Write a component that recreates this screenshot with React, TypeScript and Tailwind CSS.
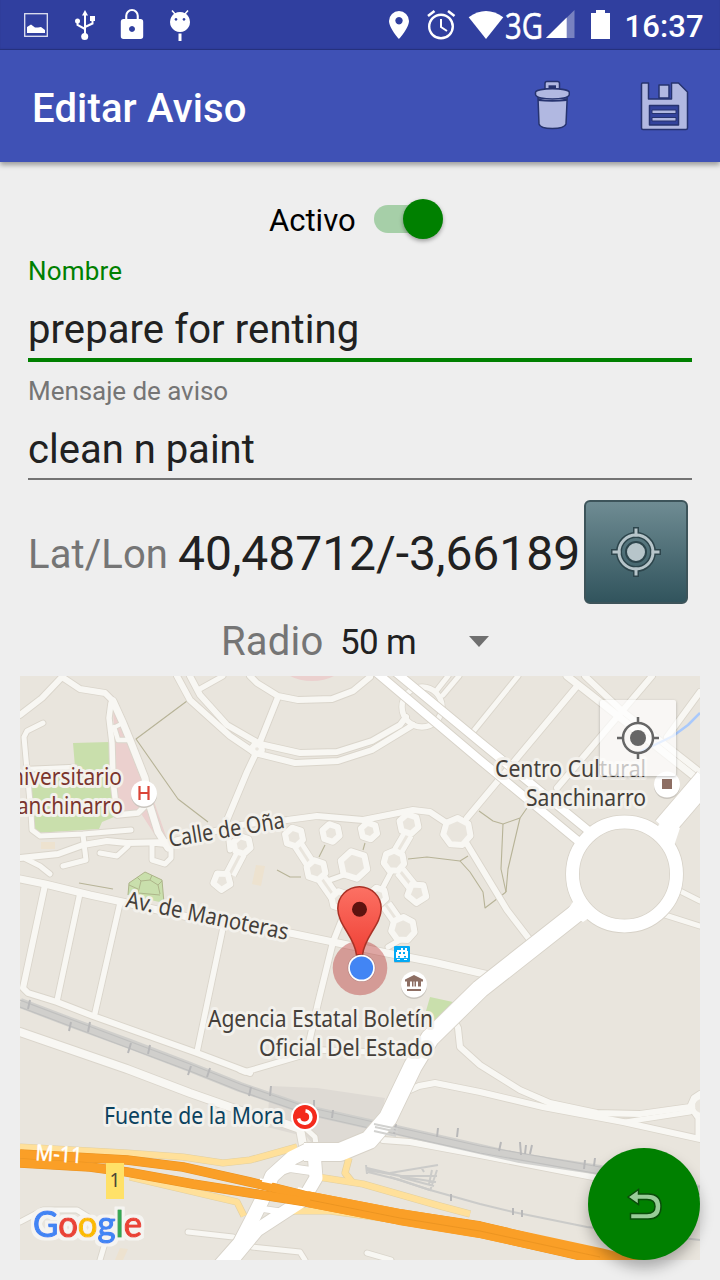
import React from "react";

type Line = [string, number];

const BG = "#e9e5dd";

const minorRoads: Line[] = [
  ["20,715 42,698 62,677 80,689 105,693 113,701", 6],
  ["113,701 123,723 130,740 145,778 149,803 158,832 168,848", 7],
  ["111,703 109,718 112,743 113,780 117,815 138,813 145,806", 5.5],
  ["113,728 123,723", 4],
  ["114,727 118,740 130,740", 4.5],
  ["43,723 27,731 24,737 27,770 31,813 32,830 40,836 83,834 131,830", 5],
  ["28,769 75,767", 4.5],
  ["20,858 58,854 83,845 107,841 127,843 170,842", 6],
  ["83,835 86,860 63,866", 5],
  ["100,853 117,856 128,846", 5],
  ["26,859 40,866 50,874", 5],
  ["152,843 152,860 165,864 171,858 171,845 152,843", 5],
  ["20,879 45,884 90,895 127,903 223,925 290,933 333,942 387,953 433,962 480,973 498,977", 7],
  ["45,885 23,988 28,993 57,1002 93,1016 197,1053 250,1073", 6],
  ["80,893 57,1001", 5.5],
  ["120,903 95,1013", 5.5],
  ["223,928 197,1052", 5.5],
  ["20,1032 127,1069 190,1093 250,1114 283,1123 300,1129 303,1145", 8],
  ["240,1070 245,1072 303,1055 320,1050 373,1052", 5.5],
  ["343,917 333,942 318,1003 308,1047", 6],
  ["304,1127 315,1137 317,1152", 5],
  ["177,676 190,700 230,736 255,753 295,763 338,761 372,750 413,725", 6],
  ["190,676 200,695 227,725 260,744 300,753 337,752 372,741 400,725 406,717", 6],
  ["198,690 223,676", 5],
  ["256,753 247,772 227,820", 6],
  ["170,842 240,825 287,820 317,816 363,820 413,810 430,812 445,822", 6],
  ["250,676 257,683 278,696 298,700 332,699 353,691 370,677", 6],
  ["278,697 260,742", 6],
  ["437,690 448,676", 5],
  ["443,695 459,676", 5],
  ["518,676 472,733", 5],
  ["578,685 467,818", 6],
  ["652,676 557,788", 6],
  ["700,692 667,737", 6],
  ["567,676 613,712 700,781", 7],
  ["585,676 620,709 700,772", 6],
  ["467,844 507,910 530,940 545,945 578,915", 6],
  ["665,915 700,926", 5],
  ["680,891 700,901", 5],
  ["410,1090 419,1086 435,1083 480,1092 543,1107 623,1122 700,1139", 6],
  ["450,1012 458,1028 460,1047 480,1065 520,1090 550,1103 597,1113 640,1114 690,1107 694,1098 700,1094", 6],
  ["625,1122 690,1112", 5],
  ["691,1108 698,1118 698,1138", 5],
  ["383,1140 410,1142 480,1155 593,1177 700,1198", 6],
  ["252,1247 300,1252 305,1260", 5],
  ["367,1253 391,1260", 5],
  ["188,1232 233,1237", 5],
  ["20,1222 43,1210 77,1210 90,1218 105,1243 100,1260", 5],
  ["388,947 400,940", 5],
  ["391,872 380,893", 5],
  ["330,880 344,875", 5],
  ["228,832 230,850", 5],
];

const doubleRoads = ["298,845 311,865", "408,834 398,851", "322,879 336,899", "400,871 412,886", "386,905 398,922", "230,874 241,853"];

const rings: [number, number, number, number][] = [
  [294, 837, 9.5, 6], [331, 833, 9, 6], [369, 831, 8.5, 6], [409, 824, 10, 6],
  [354, 865, 14, 6], [394, 861, 10.5, 7], [316, 870, 10, 6], [417, 893, 10, 5],
  [340, 900, 9, 6], [378, 896, 8.5, 6], [403, 929, 12, 7], [457, 832, 14, 7],
  [222, 881, 9, 5], [242, 845, 9, 6], [257, 749, 5, 8],
];

const paths = [
  "187,701 136,739 178,799 208,822", "79,883 113,889", "277,870 290,877 301,877",
  "325,845 319,857", "365,843 363,850", "408,859 427,857 460,861 468,856",
  "460,861 470,872 483,892 485,908 506,892", "479,811 493,821 503,824 520,818 527,808",
  "503,824 501,869 506,892", "520,818 508,869 506,892",
];

const mainRoads: Line[] = [
  ["377,673 480,760 583,845", 8],
  ["393,670 480,742 595,836", 8],
  ["664,828 706,779", 22],
  ["588,904 480,989 430,1038 413,1066 388,1118 369,1140 340,1152 304,1152", 18],
  ["310,1149 292,1158 272,1176 262,1200 254,1216 240,1243 218,1268", 14],
  ["314,1152 316,1178 303,1200 280,1215 257,1230 229,1264", 13],
  ["272,1174 290,1168 318,1172", 8],
  ["256,1208 284,1212", 6],
];

const ramps: Line[] = [
  ["20,1147 127,1153 183,1157 223,1163 250,1160 297,1147", 6],
  ["20,1156 60,1162", 4],
  ["130,1177 173,1187 237,1202 244,1216", 6],
  ["318,1177 363,1184 440,1206 470,1214", 6],
  ["349,1158 345,1173 353,1183", 6],
  ["280,1211 330,1211 440,1226 470,1228", 6],
];

const poly = (cx: number, cy: number, r: number, n: number) =>
  Array.from({ length: n }, (_, i) => {
    const a = ((i + 0.3) / n) * Math.PI * 2;
    return `${(cx + r * Math.cos(a)).toFixed(1)},${(cy + r * Math.sin(a)).toFixed(1)}`;
  }).join(" ");

function Label({ x, y, w, size = 23, color = "#453f3a", children, transform }: { x: number; y: number; w: number; size?: number; color?: string; children: string; transform?: string }) {
  return (
    <text x={x} y={y} textLength={w} lengthAdjust="spacingAndGlyphs" transform={transform} fontSize={size} fill={color} stroke="#f3f1ec" strokeWidth="6" strokeLinejoin="round" paintOrder="stroke" fontFamily="'Noto Sans', 'Open Sans', sans-serif">
      {children}
    </text>
  );
}

function MapCanvas() {
  return (
    <svg className="block h-full w-full" viewBox="20 676 680 584" fill="none" strokeLinejoin="round" strokeLinecap="butt">
      <defs>
        <linearGradient id="pin" x1="0" y1="0" x2="0" y2="1">
          <stop offset="0" stopColor="#fc7164" />
          <stop offset="1" stopColor="#ef4136" />
        </linearGradient>
        <filter id="halo" x="-10%" y="-20%" width="120%" height="140%">
          <feMorphology in="SourceAlpha" operator="dilate" radius="3" result="fat" />
          <feGaussianBlur in="fat" stdDeviation="0.6" result="soft" />
          <feFlood floodColor="#f5f4f1" />
          <feComposite in2="soft" operator="in" result="edge" />
          <feMerge>
            <feMergeNode in="edge" />
            <feMergeNode in="SourceGraphic" />
          </feMerge>
        </filter>
      </defs>
      <rect x="20" y="676" width="680" height="584" fill={BG} />
      <path fill="#c9dfac" d="M73 743L110 742L114 817L102 822L99 829L35 833L30 770L75 767ZM145 872L162 880L164 903L128 895L129 883ZM430 997L453 1002L427 1028L424 1018Z" />
      <path stroke="#aeb58a" d="M145 872L162 880L164 903M145 872L129 883L128 895M138 893L141 881L150 880L158 885L160 894M138 893L160 895M141 881L137 877M150 880L152 875M138 889L129 885M158 885L162 881" />
      <path fill="#ebd0ce" d="M113 707L130 740L137 747L150 790L168 842L155 835L140 812L118 813Z" />
      <ellipse cx="312" cy="664" rx="31" ry="17" fill="#ebd0ce" />
      <path fill="#ede2cf" d="M41 842h14v7h-14zM256 865l9 1l-4 20l-9 -2zM120 1248l8 1l-5 11h-8z" />
      <path fill="#dedad4" d="M270 1086L317 1088L385 1098L377 1137L350 1151L320 1153L307 1137L267 1127Z" />

      <g stroke="#b7b397" strokeWidth="1.1">
        {paths.map((p) => <polyline key={p} points={p} />)}
      </g>

      <g stroke="#dad5cb">
        {minorRoads.map(([p, w]) => <polyline key={p} points={p} strokeWidth={w + 1.8} strokeLinecap="round" />)}
        {doubleRoads.map((p) => <polyline key={p} points={p} strokeWidth="14" />)}
        {rings.map(([x, y, r, n]) => <polygon key={`${x}-${y}`} points={poly(x, y, r, n)} strokeWidth="7.5" />)}
        <circle cx="422" cy="707" r="20" strokeWidth="7" />
      </g>
      <g stroke="#f8f7f3">
        {minorRoads.map(([p, w]) => <polyline key={p} points={p} strokeWidth={w} strokeLinecap="round" />)}
        {doubleRoads.map((p) => <polyline key={p} points={p} strokeWidth="12.5" />)}
        {doubleRoads.map((p) => <polyline key={`m${p}`} points={p} strokeWidth="3" stroke={BG} />)}
        {rings.map(([x, y, r, n]) => <polygon key={`${x}-${y}`} points={poly(x, y, r, n)} strokeWidth="6" fill={BG} />)}
        <circle cx="422" cy="707" r="20" strokeWidth="5.5" />
        <circle cx="702" cy="1106" r="9" strokeWidth="4" />
      </g>

      <g stroke="#cbcbc9">
        <polyline points="20,1003 70,1022 130,1044 190,1067 240,1087 307,1110 387,1128 480,1149 520,1158 600,1170 700,1190" strokeWidth="10" opacity="0.85" />
        <polyline points="20,1000 70,1019 190,1064 240,1084 307,1107 387,1125 480,1146 600,1167 700,1187" strokeWidth="1.2" stroke="#c0c0bf" />
        <polyline points="20,1007 70,1026 190,1071 240,1091 307,1114 387,1132 480,1153 600,1174 700,1194" strokeWidth="1.2" stroke="#c0c0bf" />
        <polyline points="390,1177 430,1190 480,1204 513,1212 587,1227 700,1240" strokeWidth="2" />
        <path strokeWidth="2" d="M367 1170L400 1176L437 1176M367 1168L410 1178L436 1182M368 1172L400 1180L430 1190M390 1173L438 1165M437 1170L430 1191M432 1170L429 1184M421 1167L424 1172M400 1177L434 1186M366 1165L367 1174" />
      </g>
      <g stroke="#b8b8b9" strokeWidth="2">
        <path d="M30 1000l-2 9M71 1022l-2 9M90 1022l-2 10M131 1043l-3 10M150 1045l-2 9M191 1066l-3 9M210 1068l-3 9M251 1087l-2 9M271 1086l-1 10M314 1100v9M333 1110l-1 8M376 1124l-2 8M396 1124l-2 10M438 1128l-1 9M458 1128l-1 9M501 1142l-2 9M520 1142l1 13M526 1145l-1 9M532 1145l-2 9M585 1160l-1 9M595 1158l-1 8M513 1208v7M522 1210v7M451 1194v7" />
      </g>

      <g stroke="#d7d2c8">
        {mainRoads.map(([p, w]) => <polyline key={p} points={p} strokeWidth={w + 1.8} />)}
      </g>
      <circle cx="624.5" cy="874" r="52" stroke="#d7d2c8" strokeWidth="14.5" fill={BG} />
      <circle cx="624.5" cy="874" r="52" stroke="#ffffff" strokeWidth="13" />
      <path fill="#fff" d="M566 912L577 896L598 912L583 922ZM652 834L664 818L680 828L674 846Z" />

      <g stroke="#e2cfa0">
        {ramps.map(([p, w]) => <polyline key={p} points={p} strokeWidth={w + 1.2} />)}
      </g>
      <g stroke="#ffe09a">
        {ramps.map(([p, w]) => <polyline key={p} points={p} strokeWidth={w} />)}
      </g>
      <g stroke="#ffffff">
        {mainRoads.map(([p, w]) => <polyline key={p} points={p} strokeWidth={w} />)}
      </g>
      <path d="M374 1124L398 1129M375 1127L398 1132M374 1131L396 1136" stroke="#d2d2d0" strokeWidth="2" />

      <g>
        <polyline points="20,1154 127,1160 183,1167 250,1182 307,1196 400,1214 480,1226 600,1255 640,1266" stroke="#e99220" strokeWidth="9.5" />
        <polyline points="20,1163 90,1167 127,1172 193,1184 250,1193 307,1202 400,1220 480,1233 560,1251 640,1270" stroke="#e99220" strokeWidth="9.5" />
        <polyline points="20,1154 127,1160 183,1167 250,1182 307,1196 400,1214 480,1226 600,1255 640,1266" stroke="#fa9f27" strokeWidth="8.5" />
        <polyline points="20,1163 90,1167 127,1172 193,1184 250,1193 307,1202 400,1220 480,1233 560,1251 640,1270" stroke="#fa9f27" strokeWidth="8.5" />
        <polyline points="307,1199 400,1217 480,1230 600,1256 660,1271" stroke="#fa9f27" strokeWidth="16" />
        <polyline points="310,1200 400,1218 480,1231 600,1257" stroke="#e99220" strokeWidth="0.8" />
        <path d="M260 1179l13 3M262 1181l10 2M298 1188l12 2" stroke="#fff" strokeWidth="1.5" />
      </g>

      <path d="M700 713L688 725L673 736L640 752" stroke="#a9c9fb" strokeWidth="2.5" />

      <text x="35" y="1160" fontSize="22" fill="#fff" stroke="#fff" strokeWidth="0.5" textLength="47" lengthAdjust="spacingAndGlyphs" transform="rotate(4 35 1160)" fontFamily="'Noto Sans', sans-serif">M-11</text>
      <rect x="106" y="1163" width="18" height="36" fill="#ffe168" />
      <text x="115" y="1187" fontSize="19" textAnchor="middle" fill="#4a4636" fontFamily="'Noto Sans', sans-serif">1</text>

      <Label x={11} y={785} w={111} color="#7b352d">niversitario</Label>
      <Label x={17} y={814} w={106} color="#7b352d">anchinarro</Label>
      <Label x={170} y={847} w={117} transform="rotate(-9.5 170 847)">Calle de Oña</Label>
      <Label x={125} y={907} w={165} transform="rotate(11.5 125 907)">Av. de Manoteras</Label>
      <Label x={495} y={776.5} w={151}>Centro Cultural</Label>
      <Label x={526} y={805.5} w={120}>Sanchinarro</Label>
      <Label x={208} y={1026.5} w={225}>Agencia Estatal Boletín</Label>
      <Label x={259} y={1055.5} w={174}>Oficial Del Estado</Label>
      <Label x={104} y={1123.5} w={180} color="#0b425f">Fuente de la Mora</Label>

      <circle cx="144" cy="795" r="13" fill="#c9c5be" />
      <circle cx="144" cy="793.5" r="13" fill="#fff" />
      <path d="M139.5 786v14M148.5 786v14M139.5 793h9" stroke="#db4437" strokeWidth="2.2" />
      <circle cx="667" cy="786" r="13" fill="#c9c5be" />
      <circle cx="667" cy="784.5" r="13" fill="#fff" />
      <rect x="662" y="779" width="10" height="10" fill="#8d6e63" />
      <circle cx="414" cy="986" r="13" fill="#c9c5be" />
      <circle cx="414" cy="984.5" r="13" fill="#fff" />
      <path fill="#8d6e63" d="M414 975l9 4.5v2h-2v5h-3v-5h-2v5h-1.5v-5h-1v5h-1.5v-5h-2v5h-3v-5h-2v-2zM407 989h14v2h-14z" />
      <rect x="394" y="947" width="16" height="16" rx="1" fill="#c2beb6" />
      <rect x="394" y="946" width="16" height="16" rx="1" fill="#03a9f4" />
      <path fill="#fff" d="M399 950h2v-2h2v2h2v-2h2v3h1v7h-12v-6h1v-2zM397 959h3v1h-3zM404 959h3v1h-3z" />
      <path fill="#03a9f4" d="M399 952h2v2h-2zM403 952h2v2h-2zM398 956h2v1.5h-2zM404 956h2v1.5h-2z" />
      <circle cx="305" cy="1117" r="14" fill="#fff" />
      <circle cx="305" cy="1117" r="12" fill="#f42a1c" />
      <path d="M305.5 1110.8a6.3 6.3 0 1 1 -7 7.7" stroke="#fff" strokeWidth="3.5" />
      <circle cx="304" cy="1116.5" r="2.5" fill="#f42a1c" />

      <circle cx="360" cy="968" r="27.3" fill="#b22222" fillOpacity="0.38" />
      <path d="M359.5 886.7C371.5 886.7 381.2 896.4 381.2 908.5C381.2 925 364 937 362.5 955H356.5C355 937 337.8 925 337.8 908.5C337.8 896.4 347.5 886.7 359.5 886.7Z" fill="url(#pin)" stroke="#a93226" strokeWidth="1.5" />
      <circle cx="359.5" cy="909.3" r="7.5" fill="#5c130f" />
      <circle cx="361.5" cy="968" r="14" fill="#00000022" />
      <circle cx="361.5" cy="968" r="13.3" fill="#fff" />
      <circle cx="361.5" cy="968" r="11.6" fill="#4285f4" />

      <text x="33" y="1237" fontSize="36" textLength="109" lengthAdjust="spacingAndGlyphs" strokeWidth="1.2" fontFamily="Lato, sans-serif" filter="url(#halo)">
        <tspan fill="#4285f4" stroke="#4285f4">G</tspan>
        <tspan fill="#ea4335" stroke="#ea4335">o</tspan>
        <tspan fill="#fbbc05" stroke="#fbbc05">o</tspan>
        <tspan fill="#4285f4" stroke="#4285f4">g</tspan>
        <tspan fill="#34a853" stroke="#34a853">l</tspan>
        <tspan fill="#ea4335" stroke="#ea4335">e</tspan>
      </text>
    </svg>
  );
}

function StatusBar() {
  return (
    <div className="h-[50px] shrink-0 bg-[#303f9f] shadow-[inset_0_-1px_1px_rgba(0,0,0,0.2)]">
      <svg className="block" width="720" height="50" viewBox="0 0 720 50" fill="#fff">
        <rect x="24.7" y="13.7" width="22.6" height="22.6" fill="none" stroke="#fff" strokeWidth="1.3" opacity="0.85" />
        <path d="M27 33v-6l4-2.5 4 3h3l3 -.5 4 3v3z" />
        <path d="M85 10l3 5.5h-6z" />
        <g fill="none" stroke="#fff" strokeWidth="2"><path d="M85 14v22M85 29l-7.5-4v-5M85 27l7.5-3.5v-5" /></g>
        <circle cx="84.7" cy="36.5" r="3.5" /><circle cx="77.5" cy="21" r="2.5" /><path d="M90 16h5v5h-5z" />
        <path fillRule="evenodd" d="M124 19h1.2v-3.2a6.8 6.8 0 0 1 13.6 0V19h1.7a2.7 2.7 0 0 1 2.7 2.7v14.6a2.7 2.7 0 0 1-2.7 2.7h-17a2.7 2.7 0 0 1-2.7-2.7V21.7A2.7 2.7 0 0 1 124 19zM127.3 19h9.4v-3.2a4.7 4.7 0 0 0-9.4 0zM132 26a3 3 0 1 0 .01 0z" />
        <path fillRule="evenodd" d="M180 12a10 10 0 1 0 .01 0zM176 18a1.4 1.4 0 1 1-.01 0zM184 18a1.4 1.4 0 1 1-.01 0z" />
        <path d="M172 10.5l3.5 4M188 10.5l-3.5 4" stroke="#fff" strokeWidth="1.5" />
        <path d="M178.5 33.5h3v7.5h-3z" />
        <path fillRule="evenodd" d="M399 11a10 10 0 0 1 10 10c0 7-10 18-10 18s-10-11-10-18a10 10 0 0 1 10-10zM399 17a3.7 3.7 0 1 0 .01 0z" />
        <g fill="none" stroke="#fff"><circle cx="441" cy="26.5" r="11.8" strokeWidth="2.4" /><path d="M441 19v8l6 4" strokeWidth="2" /><path d="M428 16l6.5-5M454.5 16l-6.5-5" strokeWidth="2.6" /></g>
        <path d="M468.7 17.3Q486 4.7 503.3 17.3L486 39z" />
        <text x="505" y="39" fontSize="36" textLength="38" lengthAdjust="spacingAndGlyphs" stroke="#fff" strokeWidth="0.6" fontFamily="'Open Sans', sans-serif">3G</text>
        <path d="M546 38L574.5 10v28z" opacity="0.35" /><path d="M546 38L566.7 17.5V38z" />
        <path d="M591 13h5v-3h9v3h5v26h-19z" />
        <text x="624.5" y="37" fontSize="31" fontWeight="500" textLength="79" fontFamily="Roboto, sans-serif">16:37</text>
      </svg>
    </div>
  );
}

export default function App() {
  return (
    <div className="flex h-[1280px] w-[720px] flex-col overflow-hidden bg-[#eeeeee] font-[Roboto,sans-serif] text-[#212121]">
      <StatusBar />
      <header className="flex h-28 shrink-0 items-center bg-[#3f51b5] pr-[31px] pl-8 shadow-[0_3px_5px_rgba(0,0,0,0.35)]">
        <h1 className="flex-1 pt-1.5 text-[40px] leading-none font-medium tracking-[0.15px] whitespace-nowrap text-white">Editar Aviso</h1>
        <svg className="mr-[70px] mb-[3px]" width="36" height="52" viewBox="534 79 36 52" fill="#b1b8e1" stroke="#26336f" strokeWidth="1.5">
          <path d="M545 89v-5.5q0-2 2-2h10.5q2 0 2 2V89z" />
          <path d="M538 98L539 124q1 4.5 13.3 4.5T566 124l1.2-26z" />
          <path d="M535.5 94.500v-2c0-5 33.8-5 33.8 0v2c-1 6-32.8 6-33.8 0z" />
          <path d="M548.5 85.3h7.5v3.5h-7.5z" fill="#26336f" stroke="none" />
          <path d="M538 98.5q14 3 29 0v2.5q-15 1.5-29 0z" fill="#26336f" stroke="none" />
        </svg>
        <svg className="mt-0.5" width="49" height="50" viewBox="640 82 49 50" fill="#b1b8e1" stroke="#26336f" strokeWidth="1.5" strokeLinejoin="round">
          <path d="M642.5 83h6v16h23V83h7l9 9v36q0 1.5-1.5 1.5h-43q-1.500 0-1.500-1.500V84.500q0-1.500 1-1.500z" />
          <path d="M659 85h10v13h-10z" />
          <path d="M649.500 105.500h29v19.500h-29z" fill="#33439c" />
          <path d="M652 110h24v3.500h-24zM652 117.500h24v3.500h-24z" strokeWidth="1" />
        </svg>
      </header>

      <main className="flex flex-1 flex-col">
        <div className="flex h-[95px] items-start pt-[37px] pl-[269px]">
          <span className="w-[105px] pt-1.5 text-[31px] leading-none text-black">Activo</span>
          <div className="flex h-10 w-[69px] items-center">
            <span className="h-7 w-12 rounded-full bg-[#a6cfa8]" />
            <span className="-ml-[19px] size-10 shrink-0 rounded-full bg-[#008000] shadow-[0_2px_4px_rgba(0,0,0,0.35)]" />
          </div>
        </div>

        <section className="mx-7 flex h-[105px] flex-col border-b-4 border-[#008000]">
          <label className="text-[26px] leading-7 tracking-[0.2px] text-[#008000]">Nombre</label>
          <span className="pt-[25px] text-[40px] leading-10 tracking-[0.1px]">prepare for renting</span>
        </section>
        <section className="mx-7 flex h-[118px] flex-col border-b-2 border-[#737373] pt-[15px]">
          <label className="text-[26px] leading-7 tracking-[-0.05px] text-[#757575]">Mensaje de aviso</label>
          <span className="pt-[25px] text-[40px] leading-10">clean n paint</span>
        </section>

        <section className="flex h-[124px] items-start pt-5 pl-7">
          <span className="w-[150px] pt-[35px] text-[40px] leading-10 tracking-[0.1px] whitespace-nowrap text-[#757575]">Lat/Lon</span>
          <span className="w-[406px] pt-[29px] text-[48px] leading-[50px] tracking-[-0.03px] whitespace-nowrap">40,48712/-3,66189</span>
          <button className="flex size-[104px] items-center justify-center rounded-md border-2 border-[#3d545a] bg-gradient-to-b from-[#6f8c93] to-[#31545d]">
            <svg width="52" height="52" viewBox="0 0 52 52" fill="none">
              <g stroke="#2d454c"><circle cx="26" cy="26" r="17" strokeWidth="6" /><path d="M26 1v10M26 41v10M1 26h10M41 26h10" strokeWidth="6" /><circle cx="26" cy="26" r="10" fill="#b7c5ca" strokeWidth="2" /></g>
              <circle cx="26" cy="26" r="17" stroke="#b7c5ca" strokeWidth="3" />
              <path d="M26 2.5v8M26 41.5v8M2.5 26h8M41.5 26h8" stroke="#b7c5ca" strokeWidth="3" />
            </svg>
          </button>
        </section>

        <div className="flex h-[72px] items-start pl-[221px] whitespace-nowrap">
          <span className="w-[119px] pt-[18px] text-[40px] leading-10 tracking-[0.2px] text-[#757575]">Radio</span>
          <span className="w-[128px] pt-[19px] text-[35px] leading-10 tracking-[-0.7px]">50 m</span>
          <svg className="mt-8" width="22" height="12" viewBox="0 0 22 12"><path d="M1 0h20L11 11z" fill="#6f6f6f" /></svg>
        </div>

        <div className="relative mx-5 h-[584px]">
          <MapCanvas />
          <button className="absolute top-6 right-6 flex size-[76px] items-center justify-center rounded-[2px] bg-white/70 shadow-[0_1px_3px_rgba(0,0,0,0.25)]">
            <svg width="42" height="42" viewBox="0 0 42 42" fill="none" stroke="#666">
              <circle cx="21" cy="21" r="15" strokeWidth="2.5" /><path d="M21 0v6M21 36v6M0 21h6M36 21h6" strokeWidth="2.5" /><circle cx="21" cy="21" r="8" fill="#666" stroke="none" />
            </svg>
          </button>
          <button className="absolute right-0 bottom-0 flex size-28 items-center justify-center rounded-full bg-[#008000] shadow-[0_8px_14px_rgba(0,0,0,0.28)]">
            <svg width="38" height="34" viewBox="625 1187 38 34" fill="#99cc99" stroke="#0a4d0a" strokeWidth="1.5">
              <path d="M628 1197L638.5 1189.5V1194H648Q661 1194 661 1206.5T648 1219H630.5V1213.5H647Q655 1213.5 655 1206.5T647 1199.5H638.5V1204.5Z" />
            </svg>
          </button>
        </div>
      </main>
    </div>
  );
}
